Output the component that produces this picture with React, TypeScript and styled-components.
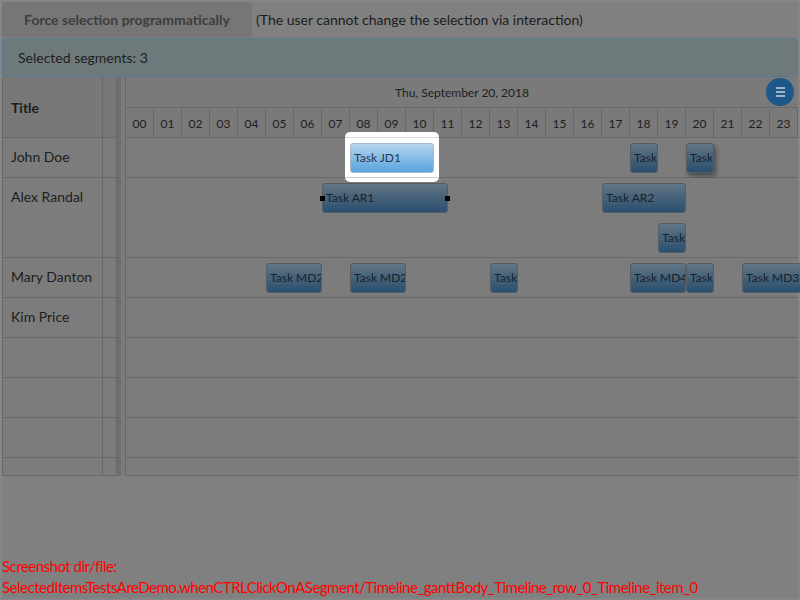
import React from "react";
import styled, { createGlobalStyle } from "styled-components";

const GlobalStyle = createGlobalStyle`
  html, body { margin: 0; padding: 0; background: #808080; }
  body { font-family: Lato, "Open Sans", sans-serif; }
  * { box-sizing: border-box; }
`;

const HOUR = 28;
const LINE = "#686868";

type TaskT = {
  label: string;
  start: number;
  end: number;
  lane?: number;
  shadow?: boolean;
  handles?: boolean;
  selected?: boolean;
};

type RowT = { name: string; height: number; tasks: TaskT[] };

const rows: RowT[] = [
  {
    name: "John Doe",
    height: 40,
    tasks: [
      { label: "Task JD1", start: 8, end: 11, selected: true },
      { label: "Task", start: 18, end: 19 },
      { label: "Task", start: 20, end: 21, shadow: true },
    ],
  },
  {
    name: "Alex Randal",
    height: 80,
    tasks: [
      { label: "Task AR1", start: 7, end: 11.5, handles: true },
      { label: "Task AR2", start: 17, end: 20 },
      { label: "Task", start: 19, end: 20, lane: 1 },
    ],
  },
  {
    name: "Mary Danton",
    height: 40,
    tasks: [
      { label: "Task MD2", start: 5, end: 7 },
      { label: "Task MD2", start: 8, end: 10 },
      { label: "Task", start: 13, end: 14 },
      { label: "Task MD4", start: 18, end: 20 },
      { label: "Task", start: 20, end: 21 },
      { label: "Task MD3", start: 22, end: 24.2 },
    ],
  },
  { name: "Kim Price", height: 40, tasks: [] },
  { name: "", height: 40, tasks: [] },
  { name: "", height: 40, tasks: [] },
  { name: "", height: 40, tasks: [] },
  { name: "", height: 18, tasks: [] },
];

const hours = Array.from({ length: 24 }, (_, i) => String(i).padStart(2, "0"));

const Page = styled.div`
  width: 800px;
  height: 600px;
  border: 2px solid #868686;
  background: #808080;
  display: flex;
  flex-direction: column;
`;

const Toolbar = styled.div`
  display: flex;
  align-items: flex-start;
  height: 36px;
`;

const ForceButton = styled.div`
  width: 250px;
  height: 35px;
  background: #767676;
  border-radius: 0 4px 4px 0;
  display: flex;
  align-items: center;
  justify-content: center;
  font-weight: 700;
  font-size: 14px;
  color: #3d3d3d;
`;

const Note = styled.div`
  margin-left: 4px;
  height: 35px;
  display: flex;
  align-items: center;
  font-size: 14px;
  color: #1c1c1c;
`;

const InfoBar = styled.div`
  height: 39px;
  border: 1px solid #587a91;
  border-radius: 4px;
  background: #6e797c;
  padding-left: 15px;
  display: flex;
  align-items: center;
  font-size: 14px;
  color: #1e1e1e;
`;

const Gantt = styled.div`
  display: flex;
  height: 399px;
`;

const LeftPane = styled.div`
  width: 115px;
  border-left: 1px solid ${LINE};
  display: flex;
  flex-direction: column;
`;

const LeftHeader = styled.div`
  height: 61px;
  border-bottom: 1px solid ${LINE};
  display: flex;
  background: #787878;
`;

const TitleHead = styled.div`
  width: 100px;
  border-right: 1px solid ${LINE};
  padding-left: 8px;
  display: flex;
  align-items: center;
  font-weight: 700;
  font-size: 14px;
  color: #1c1c1c;
`;

const NarrowCell = styled.div`
  width: 14px;
  border-right: 1px solid ${LINE};
`;

const LeftRow = styled.div<{ $h: number }>`
  height: ${(p) => p.$h}px;
  border-bottom: 1px solid ${LINE};
  display: flex;
  background: #7c7c7c;
`;

const NameCell = styled.div`
  width: 100px;
  border-right: 1px solid ${LINE};
  padding: 0 8px;
  font-size: 14px;
  line-height: 37px;
  color: #1d1d1d;
  white-space: nowrap;
`;

const Splitter = styled.div`
  width: 8px;
  background: linear-gradient(to right, #6e6e6e 0 4px, #7b7b7b 4px);
`;

const RightPane = styled.div`
  flex: 1;
  border-left: 1px solid ${LINE};
  position: relative;
  display: flex;
  flex-direction: column;
`;

const DateRow = styled.div`
  height: 30px;
  display: flex;
  align-items: center;
  justify-content: center;
  font-size: 12px;
  color: #1e1e1e;
  background: #7a7a7a;
`;

const HourRow = styled.div`
  height: 31px;
  border-top: 1px solid ${LINE};
  border-bottom: 1px solid ${LINE};
  display: grid;
  grid-template-columns: repeat(24, ${HOUR}px);
  background: #7a7a7a;
`;

const HourCell = styled.div`
  border-right: 1px solid ${LINE};
  display: flex;
  align-items: center;
  justify-content: center;
  font-size: 12px;
  color: #202020;
  padding-top: 1px;
`;

const Track = styled.div<{ $h: number }>`
  height: ${(p) => p.$h}px;
  border-bottom: 1px solid ${LINE};
  position: relative;
  background: #7c7c7c;
`;

const Bar = styled.div<{ $shadow?: boolean; $clip: boolean }>`
  position: absolute;
  height: 30px;
  border: 1px solid #535d66;
  border-radius: 3px;
  background: linear-gradient(#617584, #2b4f6f);
  font-size: 12px;
  line-height: 28px;
  color: #18222c;
  padding-left: 3px;
  white-space: nowrap;
  overflow: ${(p) => (p.$clip ? "hidden" : "visible")};
  box-shadow: ${(p) => (p.$shadow ? "2px 3px 4px rgba(0,0,0,0.4)" : "none")};
`;

const Handle = styled.span<{ $side: "left" | "right" }>`
  position: absolute;
  top: 12px;
  ${(p) => (p.$side === "left" ? "left: -3px;" : "right: -3px;")}
  width: 5px;
  height: 5px;
  background: #000;
  z-index: 1;
`;

const Spotlight = styled.div`
  position: absolute;
  top: -6px;
  width: 94px;
  height: 50px;
  background: #fff;
  border-radius: 5px;
  z-index: 3;
  &::before,
  &::after {
    content: "";
    position: absolute;
    left: 0;
    right: 0;
    height: 1px;
  }
  &::before {
    top: 5px;
    background: #dcdcdc;
  }
  &::after {
    top: 45px;
    background: #cfcfcf;
  }
`;

const SelectedBar = styled.div`
  position: absolute;
  left: 5px;
  top: 11px;
  height: 30px;
  border: 1px solid #a7b9c8;
  border-radius: 3px;
  background: linear-gradient(#b3d5ef, #5ba3de);
  font-size: 12px;
  line-height: 28px;
  color: #28394a;
  padding-left: 3px;
  white-space: nowrap;
  overflow: hidden;
  z-index: 1;
`;

const MenuButton = styled.div`
  position: absolute;
  top: 1px;
  right: 4px;
  width: 28px;
  height: 28px;
  border-radius: 50%;
  background: #1c5889;
  display: flex;
  flex-direction: column;
  align-items: center;
  justify-content: center;
  gap: 2px;
  z-index: 4;
`;

const MenuLine = styled.span`
  width: 9px;
  height: 2px;
  background: #9db2c5;
`;

const Footer = styled.div`
  margin-top: auto;
  color: #ff0000;
  font-size: 15px;
  line-height: 21px;
  letter-spacing: -0.5px;
`;

function TaskBar({ t }: { t: TaskT }) {
  const left = t.start * HOUR;
  const width = (t.end - t.start) * HOUR;
  const top = 5 + (t.lane ?? 0) * 40;
  if (t.selected) {
    return (
      <Spotlight style={{ left: left - 5 }}>
        <SelectedBar style={{ width }}>{t.label}</SelectedBar>
      </Spotlight>
    );
  }
  return (
    <Bar $shadow={t.shadow} $clip={!t.handles} style={{ left, top, width }}>
      {t.handles && <Handle $side="left" />}
      {t.label}
      {t.handles && <Handle $side="right" />}
    </Bar>
  );
}

export default function App() {
  return (
    <>
      <GlobalStyle />
      <Page>
        <Toolbar>
          <ForceButton>Force selection programmatically</ForceButton>
          <Note>(The user cannot change the selection via interaction)</Note>
        </Toolbar>
        <InfoBar>Selected segments: 3</InfoBar>
        <Gantt>
          <LeftPane>
            <LeftHeader>
              <TitleHead>Title</TitleHead>
              <NarrowCell />
            </LeftHeader>
            {rows.map((r, i) => (
              <LeftRow key={i} $h={r.height}>
                <NameCell>{r.name}</NameCell>
                <NarrowCell />
              </LeftRow>
            ))}
          </LeftPane>
          <Splitter />
          <RightPane>
            <DateRow>Thu, September 20, 2018</DateRow>
            <HourRow>
              {hours.map((h) => (
                <HourCell key={h}>{h}</HourCell>
              ))}
            </HourRow>
            {rows.map((r, i) => (
              <Track key={i} $h={r.height}>
                {r.tasks.map((t, j) => (
                  <TaskBar key={j} t={t} />
                ))}
              </Track>
            ))}
            <MenuButton>
              <MenuLine />
              <MenuLine />
              <MenuLine />
            </MenuButton>
          </RightPane>
        </Gantt>
        <Footer>
          Screenshot dir/file:
          <br />
          SelectedItemsTestsAreDemo.whenCTRLClickOnASegment/Timeline_ganttBody_Timeline_row_0_Timeline_item_0
        </Footer>
      </Page>
    </>
  );
}
